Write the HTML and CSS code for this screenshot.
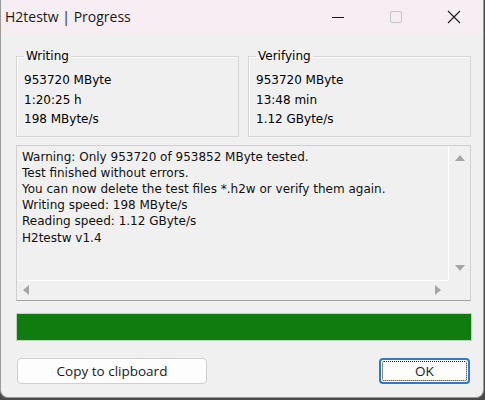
FILE: index.html
```
<!DOCTYPE html>
<html lang="en">
<head>
    <meta charset="UTF-8">
    <meta name="viewport" content="width=device-width, initial-scale=1.0">
    <title>H2testw | Progress</title>
    <link rel="stylesheet" href="styles.css">
</head>
<body>
    <div class="window">
        <div class="titlebar">
            <span class="title">H2testw | Progress</span>
            <div class="caption">
                <span class="cap">
                    <svg width="14" height="14" viewBox="0 0 14 14"><path d="M1 7.5h12" stroke="#1b1b1b" stroke-width="1"/></svg>
                </span>
                <span class="cap">
                    <svg width="14" height="14" viewBox="0 0 14 14"><rect x="1.5" y="1.5" width="11" height="11" rx="1.5" fill="none" stroke="#c4c4c4" stroke-width="1"/></svg>
                </span>
                <span class="cap">
                    <svg width="14" height="14" viewBox="0 0 14 14"><path d="M1 1l12 12M13 1L1 13" stroke="#1b1b1b" stroke-width="1.1"/></svg>
                </span>
            </div>
        </div>

        <div class="client">
            <div class="groups">
                <fieldset class="group">
                    <legend>Writing</legend>
                    <div>953720 MByte</div>
                    <div>1:20:25 h</div>
                    <div>198 MByte/s</div>
                </fieldset>
                <fieldset class="group">
                    <legend>Verifying</legend>
                    <div>953720 MByte</div>
                    <div>13:48 min</div>
                    <div>1.12 GByte/s</div>
                </fieldset>
            </div>

            <div class="log">
                <div class="log-text">
                    <div>Warning: Only 953720 of 953852 MByte tested.</div>
                    <div>Test finished without errors.</div>
                    <div>You can now delete the test files *.h2w or verify them again.</div>
                    <div>Writing speed: 198 MByte/s</div>
                    <div>Reading speed: 1.12 GByte/s</div>
                    <div>H2testw v1.4</div>
                </div>
                <div class="vscroll">
                    <span class="arrow up"></span>
                    <span class="arrow down"></span>
                </div>
                <div class="hscroll">
                    <span class="arrow left"></span>
                    <span class="arrow right"></span>
                </div>
                <div class="corner"></div>
            </div>

            <div class="progress">
                <div class="bar" style="width: 100%"></div>
            </div>

            <div class="buttons">
                <button type="button" class="btn copy-btn">Copy to clipboard</button>
                <button type="button" class="btn ok-btn"><span class="focus">OK</span></button>
            </div>
        </div>
    </div>
</body>
</html>
```

FILE: styles.css
```
* {
    margin: 0;
    padding: 0;
    box-sizing: border-box;
}
body {
    width: 485px;
    height: 400px;
    background: #4a4a4a; /* desktop behind the dialog */
    overflow: hidden;
    font-family: "DejaVu Sans", Tahoma, sans-serif;
    font-size: 12px;
    color: #000;
}
.window {
    width: 484px;
    height: 398px;
    background: #f0f0f0;
    border: 1px solid #9a9a9a;
    border-top: none;
    border-radius: 0 0 8px 8px;
    overflow: hidden;
    display: flex;
    flex-direction: column;
}

/* title bar */
.titlebar {
    height: 34px;
    background: #f6eef2;
    display: flex;
    align-items: center;
    justify-content: space-between;
}
.title {
    font-family: "Open Sans", "Noto Sans", sans-serif;
    font-size: 14px;
    color: #1a1a1a;
    padding-left: 4px;
    padding-bottom: 1px;
}
.caption {
    display: flex;
    height: 100%;
}
.cap {
    width: 58px;
    display: flex;
    align-items: center;
    justify-content: center;
    padding-bottom: 1px;
}

/* dialog body */
.client {
    flex: 1;
    padding: 14px 12px 0 15px;
    display: flex;
    flex-direction: column;
}
.groups {
    display: grid;
    grid-template-columns: 223px 223px;
    column-gap: 9px;
}
.group {
    border: 1px solid #d6d6d6;
    box-shadow: inset 1px 1px 0 #fbfbfb;
    padding: 7px 7px 6px;
    line-height: 19.5px;
}
.group legend {
    margin-left: 0;
    padding: 0 2px;
    line-height: 16px;
}

/* report box with scroll bars */
.log {
    margin-top: 8px;
    height: 156px;
    border: 1px solid #d0d0d0;
    border-bottom-color: #a3a3a3;
    display: grid;
    grid-template-columns: 1fr 22px;
    grid-template-rows: 1fr 20px;
}
.log-text {
    padding: 3px 0 0 5px;
    line-height: 16.2px;
    color: #111;
    white-space: nowrap;
    overflow: hidden;
}
.vscroll {
    border-left: 1px solid #fff;
    display: flex;
    flex-direction: column;
    justify-content: space-between;
    align-items: center;
    padding: 9px 0 9px;
}
.hscroll {
    border-top: 1px solid #fff;
    display: flex;
    justify-content: space-between;
    align-items: center;
    padding: 0 7px 0 6px;
}
.arrow {
    width: 0;
    height: 0;
    border: 5px solid transparent;
}
.arrow.up {
    border-bottom: 6px solid #a6a6a6;
    border-top: none;
}
.arrow.down {
    border-top: 6px solid #a6a6a6;
    border-bottom: none;
}
.arrow.left {
    border-right: 6px solid #a6a6a6;
    border-left: none;
}
.arrow.right {
    border-left: 6px solid #a6a6a6;
    border-right: none;
}

/* progress bar */
.progress {
    margin-top: 12px;
    height: 28px;
    width: 456px;
    border: 1px solid #bcd3bc;
    background: #e6e6e6;
}
.bar {
    height: 100%;
    background: #107c10;
}

/* buttons */
.buttons {
    margin-top: 17px;
    display: flex;
    justify-content: space-between;
    padding-left: 1px;
    padding-right: 1px;
}
.btn {
    height: 26px;
    background: #fdfdfd;
    border: 1px solid #d0d0d0;
    border-radius: 4px;
    font-family: "Open Sans", "Noto Sans", sans-serif;
    font-size: 13.5px;
    color: #1a1a1a;
    cursor: pointer;
}
.copy-btn {
    width: 190px;
}
.ok-btn {
    width: 91px;
    border: 2px solid #2a7bd0;
    padding: 1px;
}
.ok-btn .focus {
    display: flex;
    align-items: center;
    justify-content: center;
    height: 100%;
    border: 1px dotted #222;
    border-radius: 2px;
}
```
